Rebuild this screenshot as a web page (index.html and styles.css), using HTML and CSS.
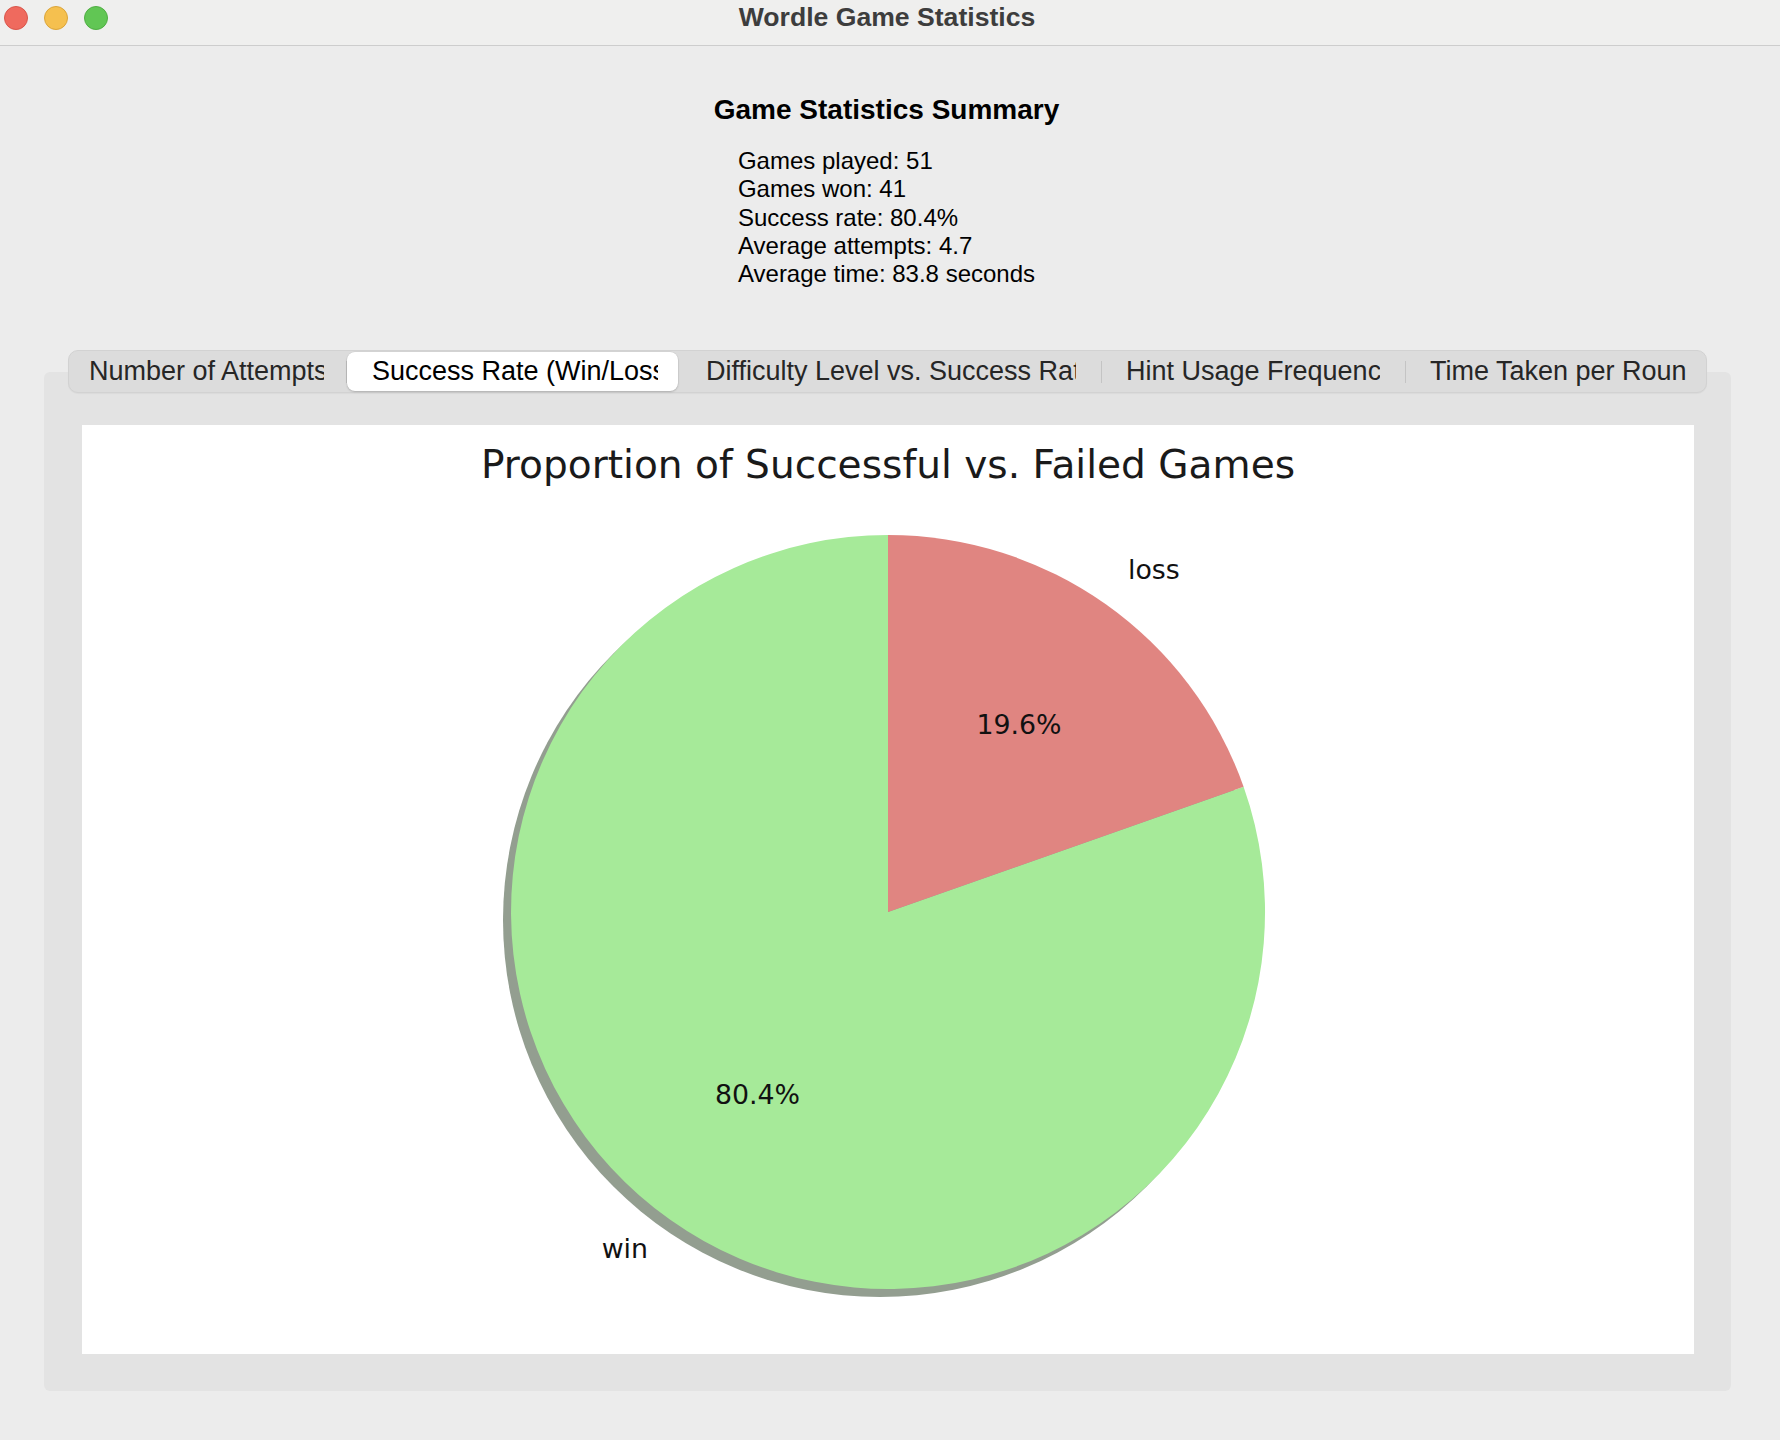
FILE: index.html
```html
<!DOCTYPE html>
<html lang="en">
<head>
<meta charset="utf-8">
<title>Wordle Game Statistics</title>
<link rel="stylesheet" href="styles.css">
</head>
<body>
<div class="window">
  <header class="titlebar">
    <div class="lights">
      <span class="light light-close"></span>
      <span class="light light-min"></span>
      <span class="light light-max"></span>
    </div>
    <div class="wintitle">Wordle Game Statistics</div>
    <div class="spacer"></div>
  </header>

  <section class="summary">
    <h1 class="summary-title">Game Statistics Summary</h1>
    <div class="stats">
      <div>Games played: 51</div>
      <div>Games won: 41</div>
      <div>Success rate: 80.4%</div>
      <div>Average attempts: 4.7</div>
      <div>Average time: 83.8 seconds</div>
    </div>
  </section>

  <section class="notebook">
    <nav class="tabbar">
      <div class="tab tab-1"><span class="tab-label">Number of Attempts</span></div>
      <span class="sep"></span>
      <div class="tab tab-2 selected"><span class="tab-label">Success Rate (Win/Loss)</span></div>
      <div class="tab tab-3"><span class="tab-label">Difficulty Level vs. Success Rate</span></div>
      <span class="sep"></span>
      <div class="tab tab-4"><span class="tab-label">Hint Usage Frequency</span></div>
      <span class="sep"></span>
      <div class="tab tab-5"><span class="tab-label">Time Taken per Round</span></div>
    </nav>
    <div class="pane">
      <div class="chart">
        <svg class="chart-svg" width="1612" height="929" viewBox="0 0 1612 929" xmlns="http://www.w3.org/2000/svg">
          <text class="chart-title" x="806" y="53" text-anchor="middle">Proportion of Successful vs. Failed Games</text>
          <circle cx="798" cy="495" r="377" fill="#939e90"/>
          <path d="M806,487 L1161.6,361.7 A377,377 0 1,1 806,110 Z" fill="#a6ea99"/>
          <path d="M806,487 L806,110 A377,377 0 0,1 1161.6,361.7 Z" fill="#e08581"/>
          <text class="chart-label" x="1046" y="154" text-anchor="start">loss</text>
          <text class="chart-label" x="566" y="833" text-anchor="end">win</text>
          <text class="chart-label" x="937" y="309" text-anchor="middle">19.6%</text>
          <text class="chart-label" x="675.5" y="679" text-anchor="middle">80.4%</text>
        </svg>
      </div>
    </div>
  </section>
</div>
</body>
</html>
```

FILE: styles.css
```css
html, body {
  margin: 0;
  padding: 0;
}

body {
  background: #ececec;
  width: 1780px;
  height: 1440px;
  overflow: hidden;
  font-family: "Liberation Sans", Arial, sans-serif;
}

.window {
  display: flex;
  flex-direction: column;
}

/* Title bar */
.titlebar {
  height: 46px;
  box-sizing: border-box;
  background: #efefee;
  border-bottom: 1px solid #cdcdcd;
  display: grid;
  grid-template-columns: 1fr auto 1fr;
  align-items: start;
}

.lights {
  display: flex;
  gap: 16px;
  padding-left: 4px;
  padding-top: 6px;
}

.light {
  width: 24px;
  height: 24px;
  border-radius: 50%;
  box-sizing: border-box;
}

.light-close {
  background: #ef6a5e;
  border: 1px solid #d9564b;
}

.light-min {
  background: #f5c04f;
  border: 1px solid #dba53a;
}

.light-max {
  background: #61c654;
  border: 1px solid #4fae43;
}

.wintitle {
  font-weight: bold;
  font-size: 26.6px;
  line-height: 34px;
  color: #3d3d3d;
  padding-right: 6px;
}

/* Summary */
.summary {
  display: flex;
  flex-direction: column;
  align-items: center;
  padding-right: 7px;
}

.summary-title {
  margin: 48px 0 0 0;
  font-size: 28px;
  line-height: 32px;
  font-weight: bold;
  color: #000;
}

.stats {
  margin-top: 21px;
  font-size: 24px;
  line-height: 28.25px;
  color: #000;
}

/* Notebook */
.notebook {
  margin: 62px 49px 0 44px;
  display: flex;
  flex-direction: column;
}

.tabbar {
  position: relative;
  z-index: 1;
  margin: 0 24px;
  height: 43px;
  box-sizing: border-box;
  padding: 1px;
  border: 1px solid #d2d2d2;
  border-radius: 10px;
  background: #dcdcdc;
  display: flex;
  align-items: stretch;
  box-shadow: 0 1px 1px rgba(0, 0, 0, 0.04);
}

.sep {
  width: 1px;
  height: 22px;
  align-self: center;
  background: #c4c4c4;
  flex: none;
}

.tab {
  flex: none;
  box-sizing: border-box;
  height: 39px;
  display: flex;
  align-items: center;
  font-size: 27px;
  line-height: 39px;
  color: #262626;
}

.tab-label {
  display: block;
  white-space: nowrap;
  overflow: hidden;
}

.tab.selected {
  background: #ffffff;
  color: #000;
  border-radius: 8px;
  box-shadow: 0 1px 2px rgba(0, 0, 0, 0.18), 0 0 0 0.5px rgba(0, 0, 0, 0.06);
}

.tab-1 { width: 276px; padding-left: 19px; }
.tab-1 .tab-label { width: 235px; }
.tab-2 { width: 331px; padding-left: 25px; }
.tab-2 .tab-label { width: 286px; }
.tab-3 { width: 423px; padding-left: 28px; }
.tab-3 .tab-label { width: 370px; }
.tab-4 { width: 303px; padding-left: 24px; }
.tab-4 .tab-label { width: 254px; }
.tab-5 { width: 299px; padding-left: 24px; }
.tab-5 .tab-label { width: 257px; }

.pane {
  margin-top: -21px;
  background: #e3e3e3;
  border-radius: 6px;
  padding: 53px 37px 37px 38px;
}

.chart {
  width: 1612px;
  height: 929px;
  background: #ffffff;
}

.chart-svg {
  display: block;
}

.chart-title {
  font-family: "DejaVu Sans", sans-serif;
  font-size: 39.1px;
  fill: #1a1a1a;
}

.chart-label {
  font-family: "DejaVu Sans", sans-serif;
  font-size: 26.8px;
  fill: #111111;
}
```
